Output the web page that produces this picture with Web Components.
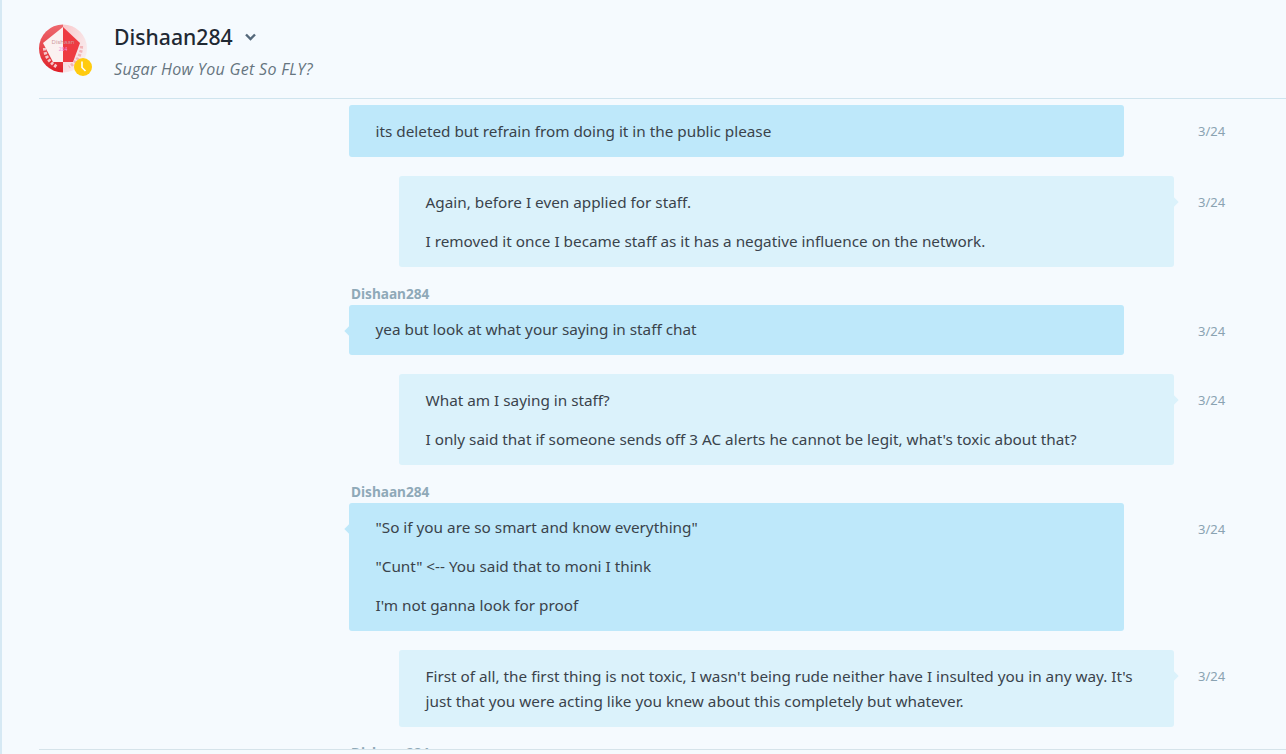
<!DOCTYPE html>
<html>
<head>
<meta charset="utf-8">
<title>Dishaan284</title>
<style>
  html, body { margin: 0; height: 100%; overflow: hidden; background: #f5fafe; }
  body { font-family: "Noto Sans", "Open Sans", sans-serif; }
</style>
</head>
<body>
<chat-app>
  <chat-header slot="header" name="Dishaan284" status="Sugar How You Get So FLY?"></chat-header>

  <chat-message from="them" time="3/24" nocaret>
    <p>its deleted but refrain from doing it in the public please</p>
  </chat-message>
  <chat-message from="me" time="3/24">
    <p>Again, before I even applied for staff.</p>
    <p>I removed it once I became staff as it has a negative influence on the network.</p>
  </chat-message>
  <chat-message from="them" time="3/24" name="Dishaan284">
    <p>yea but look at what your saying in staff chat</p>
  </chat-message>
  <chat-message from="me" time="3/24">
    <p>What am I saying in staff?</p>
    <p>I only said that if someone sends off 3 AC alerts he cannot be legit, what's toxic about that?</p>
  </chat-message>
  <chat-message from="them" time="3/24" name="Dishaan284">
    <p>"So if you are so smart and know everything"</p>
    <p>"Cunt" &lt;-- You said that to moni I think</p>
    <p>I'm not ganna look for proof</p>
  </chat-message>
  <chat-message from="me" time="3/24">
    <p>First of all, the first thing is not toxic, I wasn't being rude neither have I insulted you in any way. It's just that you were acting like you knew about this completely but whatever.</p>
  </chat-message>
  <chat-message from="them" name="Dishaan284" style="margin-top:-1px"></chat-message>
</chat-app>

<script>
// page frame: header on top, messages clipped above the composer line
class ChatApp extends HTMLElement {
  constructor() {
    super();
    const shadow = this.attachShadow({ mode: "open" });
    shadow.innerHTML = `
      <style>
        :host {
          display: flex;
          flex-direction: column;
          height: 100vh;
          box-sizing: border-box;
          border-left: 2px solid #d6e9f4;
          background: #f5fafe;
        }
        .list {
          flex: 1;
          min-height: 0;
          overflow: hidden;
          padding: 6px 0 0 347px;
          display: flex;
          flex-direction: column;
          gap: 19px;
        }
        .foot {
          flex: none;
          height: 4px;
          margin-left: 37px;
          border-top: 1px solid #d5e3ea;
        }
      </style>
      <slot name="header"></slot>
      <div class="list"><slot></slot></div>
      <div class="foot"></div>
    `;
  }
}

class ChatHeader extends HTMLElement {
  constructor() {
    super();
    const shadow = this.attachShadow({ mode: "open" });
    shadow.innerHTML = `
      <style>
        :host {
          display: flex;
          flex: none;
          height: 98px;
          margin-left: 37px;
          border-bottom: 1px solid #cfe4ee;
          gap: 27px;
        }
        chat-avatar { margin-top: 24px; }
        .text { display: flex; flex-direction: column; }
        .name {
          margin-top: 20px;
          height: 34px;
          display: flex;
          align-items: center;
          gap: 12px;
          font-size: 21.2px;
          font-weight: 500;
          line-height: 34px;
          color: #1f2933;
        }
        .status {
          margin-top: 5px;
          font-family: "Open Sans", sans-serif;
          font-size: 16px;
          letter-spacing: .32px;
          line-height: 20px;
          font-style: italic;
          color: #66757f;
        }
      </style>
      <chat-avatar></chat-avatar>
      <div class="text">
        <div class="name">
          <span id="name"></span>
          <svg width="11" height="8" viewBox="0 0 11 8"><path d="M1 1.5 5.5 6 10 1.5" fill="none" stroke="#54687a" stroke-width="2.4"/></svg>
        </div>
        <div class="status" id="status"></div>
      </div>
    `;
    shadow.getElementById("name").textContent = this.getAttribute("name");
    shadow.getElementById("status").textContent = this.getAttribute("status");
  }
}

class ChatAvatar extends HTMLElement {
  constructor() {
    super();
    const shadow = this.attachShadow({ mode: "open" });
    shadow.innerHTML = `
      <style>
        :host { display: block; position: relative; width: 48px; height: 49px; flex: none; }
        svg.logo { display: block; }
        svg.badge { position: absolute; left: 35px; top: 34px; }
      </style>
      <svg class="logo" width="48" height="49" viewBox="0 0 48 49">
        <defs>
          <clipPath id="c"><circle cx="24" cy="24.5" r="24"/></clipPath>
          <linearGradient id="red" x1="0" y1="0" x2="0" y2="1">
            <stop offset="0" stop-color="#ee6a70"/><stop offset="1" stop-color="#df2028"/>
          </linearGradient>
          <linearGradient id="fade" x1="0" y1="0" x2="1" y2="1">
            <stop offset="0" stop-color="#f9c8cb"/><stop offset="1" stop-color="#f8f6f8"/>
          </linearGradient>
          <filter id="soft"><feGaussianBlur stdDeviation=".5"/></filter>
        </defs>
        <g clip-path="url(#c)" filter="url(#soft)">
          <rect width="24" height="49" fill="url(#red)"/>
          <rect x="24" width="24" height="49" fill="url(#fade)"/>
          <path d="M24 3 41 19 34 38H24Z" fill="#ee3a43"/>
          <path d="M24 3 4 19 14 38H24Z" fill="#fbf1f1"/>
        </g>
        <g filter="url(#soft)" fill="none" stroke-width="3.2" stroke-dasharray="2.5 1.6">
          <path d="M5.5 24C6 32 10 38 18 43" stroke="#f6c9cb"/>
          <path d="M42.5 22C42.5 30 38 38 30 43" stroke="#f2b4b8"/>
        </g>
        <text x="24" y="20" text-anchor="middle" font-family="Noto Sans, sans-serif" font-size="6" fill="#cf9aa0">Dishaan</text>
        <text x="24" y="26.5" text-anchor="middle" font-family="Noto Sans, sans-serif" font-size="5" fill="#f08fe0">284</text>
      </svg>
      <svg class="badge" width="18" height="18" viewBox="0 0 18 18">
        <circle cx="9" cy="9" r="9" fill="#ffcb0f"/>
        <path d="M8 3.5V9.5L11.5 13" fill="none" stroke="#fff" stroke-width="1.6"/>
      </svg>
    `;
  }
}

// one bubble, with its date on the right; the lines come in through the slot
class ChatMessage extends HTMLElement {
  constructor() {
    super();
    const shadow = this.attachShadow({ mode: "open" });
    const mine = this.getAttribute("from") === "me";
    const name = this.getAttribute("name");
    const time = this.getAttribute("time");
    const caret = !this.hasAttribute("nocaret");
    shadow.innerHTML = `
      <style>
        :host {
          display: block;
          flex: none;
          color: #3a434b;
          font-size: 15.3px;
        }
        .name {
          margin-left: 2px;
          height: 19px;
          line-height: 15px;
          font-size: 13.65px;
          font-weight: 700;
          color: #8fa9b8;
        }
        .row { display: flex; align-items: flex-start; }
        .bubble {
          position: relative;
          box-sizing: border-box;
          width: 775px;
          padding: ${name ? "12px" : "14px"} 26px 13px 26.5px;
          border-radius: 3px;
          background: ${mine ? "#dbf2fb" : "#bee8fa"};
          margin-left: ${mine ? "50px" : "0"};
        }
        .bubble.caret::after {
          content: "";
          position: absolute;
          top: 22px;
          width: 8px;
          height: 8px;
          background: inherit;
          transform: rotate(45deg);
          ${mine ? "right: -3px;" : "left: -3px;"}
        }
        .time {
          margin-left: ${mine ? "24px" : "74px"};
          padding-top: 17px;
          line-height: 18px;
          font-size: 13px;
          color: #8aa3b2;
        }
        ::slotted(p) {
          margin: 0 0 14px;
          line-height: 25px;
        }
        ::slotted(p:last-child) { margin-bottom: 0; }
      </style>
      ${name ? `<div class="name">${name}</div>` : ""}
      ${time ? `<div class="row">
        <div class="bubble ${caret ? "caret" : ""}"><slot></slot></div>
        <div class="time">${time}</div>
      </div>` : ""}
    `;
  }
}

customElements.define("chat-app", ChatApp);
customElements.define("chat-header", ChatHeader);
customElements.define("chat-avatar", ChatAvatar);
customElements.define("chat-message", ChatMessage);
</script>
</body>
</html>
